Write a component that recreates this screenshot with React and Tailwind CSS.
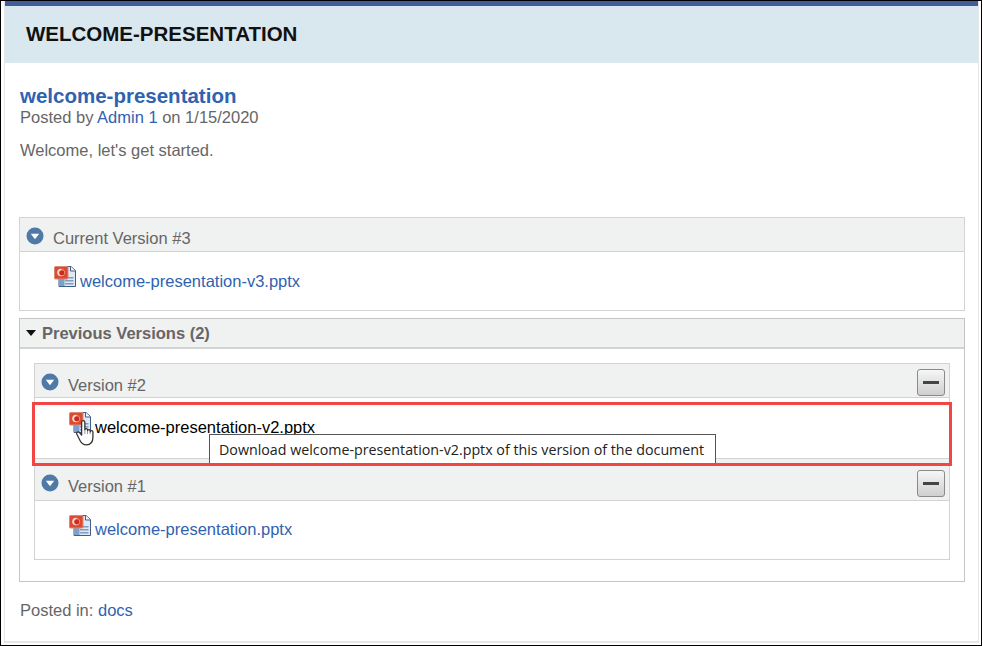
import React from "react";

const LINK = "text-[#2f62b0]";

const FileIcon = () => (
  <svg width="23" height="23" viewBox="0 0 23 23" className="shrink-0">
    <path d="M5 1.500h12l4.500 4v16H5z" fill="#dfe8f3" stroke="#3f5f86" />
    <path d="M16.500 1.500v4.500h5" fill="#f4f7fb" stroke="#3f5f86" />
    <rect x="11" y="12" width="8.500" height="1.500" fill="#7f9cc4" />
    <rect x="11" y="15" width="8.500" height="1.500" fill="#7f9cc4" />
    <rect x="11" y="18" width="8.500" height="1.500" fill="#7f9cc4" />
    <rect x="5" y="14" width="5.500" height="7" fill="#7d9fcc" />
    <rect x="0.500" y="1.500" width="13.500" height="12.500" rx="1" fill="#dd4a33" stroke="#d98a72" />
    <circle cx="7" cy="7.500" r="3.800" fill="#f9d9d0" />
    <circle cx="7.800" cy="7.800" r="2.600" fill="#cf2a1c" />
    <rect x="7.500" y="3" width="5" height="3" fill="#dd4a33" opacity="0.600" />
  </svg>
);

const DownIcon = () => (
  <svg width="18" height="18" viewBox="0 0 18 18" className="shrink-0">
    <circle cx="9" cy="9" r="8.500" fill="#4f79a6" />
    <path d="M4.800 6.800h8.400L9 12.200z" fill="#fff" />
  </svg>
);

const Cursor = () => (
  <svg width="24" height="28" viewBox="0 0 22 26" className="absolute left-[74px] top-[418px]">
    <path
      d="M6 3c0-2 3-2 3 0v7c0-1.500 2.500-1.500 2.500 0v1c0-1.500 2.500-1.500 2.500 0v1c0-1.500 2.500-1.500 2.500 0v5c0 4-2 7-6 7-3 0-4.500-1-6-4l-3-6c-.7-1.500 1.300-2.800 2.500-1.300L6 15z"
      fill="#fff"
      stroke="#333"
      strokeWidth="1.200"
      strokeLinejoin="round"
    />
    <path d="M9 10v4M11.500 11v3M14 12v2" stroke="#777" strokeWidth="0.700" fill="none" />
  </svg>
);

const MinusButton = () => (
  <div className="-mt-[4px] flex h-[27px] w-[28px] items-center justify-center rounded-[3px] border-[1.5px] border-[#8a8a8a] bg-gradient-to-b from-[#f6f6f6] to-[#cfcfcf]">
    <div className="h-[3px] w-[16px] bg-[#444]" />
  </div>
);

const VersionBlock = ({ label, file, fileSuffix, hover, headerH, bodyH, collapse, labelMt, textMt }) => (
  <div>
    <div
      className={`flex items-start justify-between border-b border-[#d3d3d3] bg-[#f0f1f1] pl-[6px] pr-[4px] ${headerH}`}
    >
      <div className="flex items-start gap-[9px] text-[16.5px] leading-[20px] text-[#666]">
        <DownIcon />
        <span className={labelMt}>{label}</span>
      </div>
      {collapse && <MinusButton />}
    </div>
    <div className={`flex items-start pl-[34px] ${bodyH}`}>
      <div className="mt-[13px]">
        <FileIcon />
      </div>
      <span className={`ml-[3px] text-[16.5px] leading-[20px] ${textMt} ${hover ? "text-black" : LINK}`}>
        {file}
        {fileSuffix}
      </span>
    </div>
  </div>
);

export default function App() {
  return (
    <div className="relative h-[646px] w-[982px] overflow-hidden border border-black bg-white pl-[3px] pr-[2px] font-['Liberation_Sans',Arial,sans-serif]">
      <div className="h-[642px] border-x border-b-2 border-[#e6e6e6]">
        <div className="flex h-[62px] items-center border-t-[5px] border-[#3f5f96] bg-[#d9e7ef] pl-[21px]">
          <h1 className="text-[20.5px] font-bold text-[#111]">WELCOME-PRESENTATION</h1>
        </div>

        <div className="pl-[14px] pr-[13px] pt-[21px]">
          <div className={`ml-[1px] text-[20.5px] font-bold leading-[24px] ${LINK}`}>welcome-presentation</div>
          <div className="-mt-[1px] ml-[1px] text-[16.5px] leading-[20px] text-[#666]">
            Posted by <span className={LINK}>Admin 1</span> on 1/15/2020
          </div>
          <p className="ml-[1px] mt-[13px] text-[16.5px] leading-[20px] text-[#666]">Welcome, let's get started.</p>

          <div className="mt-[57px] border border-[#d3d3d3]">
            <VersionBlock
              label="Current Version #3"
              file="welcome-presentation-v3.pptx"
              headerH="h-[34px] pt-[9px]"
              bodyH="h-[58px]"
              labelMt="mt-[1px]"
              textMt="mt-[19px]"
            />
          </div>

          <div className="mt-[7px] h-[264px] border border-[#c4c4c4]">
            <div className="flex h-[30px] items-center gap-[6px] border-b-2 border-[#d3d3d3] bg-[#f0f1f1] pl-[6px] text-[16.5px] font-bold text-[#666]">
              <svg width="10" height="6" viewBox="0 0 10 6">
                <path d="M0 0h10L5 6z" fill="#111" />
              </svg>
              <span>Previous Versions (2)</span>
            </div>
            <div className="mx-[14px] mt-[14px] border border-[#d3d3d3]">
              <VersionBlock
                label="Version #2"
                file="welcome-presentation-v2.pptx"
                hover
                collapse
                headerH="h-[34px] pt-[9px]"
                bodyH="h-[61px] border-b border-[#d3d3d3]"
                labelMt="mt-[2px]"
                textMt="mt-[19px]"
              />
              <VersionBlock
                label="Version #1"
                file="welcome-presentation"
                fileSuffix=".pptx"
                collapse
                headerH="h-[42px] pt-[15px]"
                bodyH="h-[58px]"
                labelMt="mt-[2px]"
                textMt="mt-[18px]"
              />
            </div>
          </div>

          <div className="ml-[1px] mt-[18px] text-[16.5px] leading-[20px] text-[#666]">
            Posted in: <span className={LINK}>docs</span>
          </div>
        </div>
      </div>

      <Cursor />
      {/* tooltip and highlight sit over the page */}
      <div className="absolute left-[208px] top-[433px] flex h-[30px] w-[507px] items-center border border-b-0 border-[#555] bg-white pl-[9px] font-['Open_Sans',sans-serif] text-[14.25px] text-[#222]">
        Download welcome-presentation-v2.pptx of this version of the document
      </div>
      <div className="absolute left-[31px] top-[401px] h-[64px] w-[920px] border-[3px] border-[#f44545]" />
    </div>
  );
}
